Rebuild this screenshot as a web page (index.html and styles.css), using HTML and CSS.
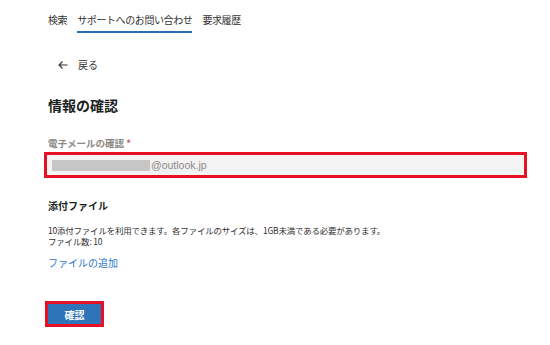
FILE: index.html
```html
<!DOCTYPE html>
<html lang="ja">
<head>
<meta charset="utf-8">
<link rel="stylesheet" href="styles.css">
</head>
<body>
<div class="page">
  <nav class="tabs">
    <span class="tab">検索</span>
    <span class="tab active">サポートへのお問い合わせ</span>
    <span class="tab">要求履歴</span>
  </nav>
  <div class="back">
    <svg class="arrow" width="10" height="8" viewBox="0 0 10 8"><path d="M9.5 4H1M4.5 0.5L1 4l3.5 3.5" fill="none" stroke="#323130" stroke-width="1.1"/></svg>
    <span>戻る</span>
  </div>
  <h1 class="title">情報の確認</h1>
  <div class="label">電子メールの確認 <span class="req">*</span></div>
  <div class="mark input-mark">
    <div class="input">
      <span class="masked"></span><span class="domain">@outlook.jp</span>
    </div>
  </div>
  <h2 class="sub">添付ファイル</h2>
  <p class="desc">10添付ファイルを利用できます。各ファイルのサイズは、1GB未満である必要があります。<br>ファイル数: 10</p>
  <a class="link">ファイルの追加</a>
  <div class="mark btn-mark">
    <button class="btn">確認</button>
  </div>
</div>
</body>
</html>
```

FILE: styles.css
```css
html, body {
  margin: 0;
  padding: 0;
  background: #fff;
}
.page {
  padding-left: 48px;
  font-family: "Noto Sans CJK JP", "Noto Sans", sans-serif;
  color: #323130;
}
.tabs {
  display: flex;
  gap: 10px;
  padding-top: 13px;
  font-size: 10px;
  line-height: 14px;
  letter-spacing: -0.4px;
}
.tab {
  padding-bottom: 4px;
  border-bottom: 2px solid transparent;
}
.tab.active {
  border-bottom-color: #2b6cb3;
}
.back {
  display: flex;
  align-items: center;
  gap: 10px;
  margin-top: 25px;
  margin-left: 10px;
  font-size: 10px;
  line-height: 14px;
}
.arrow {
  display: block;
}
.title {
  margin: 23px 0 0;
  font-size: 14px;
  line-height: 20px;
  font-weight: 700;
  color: #201f1e;
}
.label {
  margin-top: 21px;
  font-size: 9.5px;
  line-height: 14px;
  font-weight: 700;
  color: #8a8886;
}
.req {
  color: #c4655a;
}
.mark {
  border: 3px solid #e81123;
  box-sizing: border-box;
}
.input-mark {
  margin: 2px 0 0 -4px;
  width: 483px;
  height: 26px;
}
.input {
  height: 100%;
  box-sizing: border-box;
  background: #f4f3f4;
  display: flex;
  align-items: center;
  padding-left: 5px;
}
.masked {
  width: 98px;
  height: 11px;
  background: #c6c6c6;
}
.domain {
  margin-left: 1px;
  font-family: "Liberation Sans", Arial, sans-serif;
  font-size: 10.5px;
  color: #8a8886;
}
.sub {
  margin: 21px 0 0;
  font-size: 10px;
  line-height: 14px;
  font-weight: 700;
  color: #201f1e;
}
.desc {
  margin: 12px 0 0;
  font-size: 8.5px;
  line-height: 11px;
  letter-spacing: -0.22px;
  color: #323130;
}
.link {
  display: block;
  margin-top: 9px;
  font-size: 10px;
  line-height: 14px;
  color: #2b78c5;
}
.btn-mark {
  margin: 31px 0 0 -3px;
  width: 59px;
  height: 26px;
}
.btn {
  display: block;
  width: 100%;
  height: 100%;
  border: none;
  margin: 0;
  padding: 0;
  background: #2f74b9;
  color: #fff;
  font-family: "Noto Sans CJK JP", sans-serif;
  font-size: 10px;
  font-weight: 700;
}
```
